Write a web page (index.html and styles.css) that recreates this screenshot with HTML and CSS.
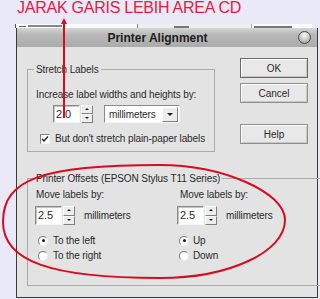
FILE: index.html
```html
<!DOCTYPE html>
<html>
<head>
    <link rel="stylesheet" href="styles.css">
</head>
<body>
    <div class="note">JARAK GARIS LEBIH AREA CD</div>

    <!-- window lying behind the dialog, only its top edge shows -->
    <div class="behind">
        <span class="tab tab-first"></span>
        <span class="tab tab-mid"></span>
        <span class="tab tab-last"></span>
    </div>

    <div class="dialog">
        <div class="titlebar">
            <span class="title">Printer Alignment</span>
            <span class="close-btn"></span>
        </div>

        <div class="dialog-body">
            <div class="top-row">
                <fieldset class="group stretch">
                    <legend>Stretch Labels</legend>
                    <div class="label-line">Increase label widths and heights by:</div>
                    <div class="control-row stretch-row">
                        <span class="spinner tall">
                            <span class="spin-field">2.0</span>
                            <span class="spin-btns">
                                <span class="spin up"></span>
                                <span class="spin down"></span>
                            </span>
                        </span>
                        <span class="combo">
                            <span class="combo-text">millimeters</span>
                            <span class="combo-btn"><span class="arrow-down"></span></span>
                        </span>
                    </div>
                    <div class="check-row">
                        <span class="checkbox">
                            <svg width="8" height="8" viewBox="0 0 8 8"><polyline points="1,4 3,6 7,1.5" fill="none" stroke="#222" stroke-width="1.4"/></svg>
                        </span>
                        <span>But don't stretch plain-paper labels</span>
                    </div>
                </fieldset>

                <div class="buttons">
                    <button class="button default">OK</button>
                    <button class="button cancel">Cancel</button>
                    <button class="button help">Help</button>
                </div>
            </div>

            <fieldset class="group offsets">
                <legend>Printer Offsets (EPSON Stylus T11 Series)</legend>
                <div class="columns">
                    <div class="column col-left">
                        <div class="label-line">Move labels by:</div>
                        <div class="control-row">
                            <span class="spinner">
                                <span class="spin-field">2.5</span>
                                <span class="spin-btns">
                                    <span class="spin up"></span>
                                    <span class="spin down"></span>
                                </span>
                            </span>
                            <span class="unit">millimeters</span>
                        </div>
                        <div class="radio-row first">
                            <span class="radio on"></span>
                            <span>To the left</span>
                        </div>
                        <div class="radio-row">
                            <span class="radio"></span>
                            <span>To the right</span>
                        </div>
                    </div>
                    <div class="column col-right">
                        <div class="label-line">Move labels by:</div>
                        <div class="control-row">
                            <span class="spinner">
                                <span class="spin-field">2.5</span>
                                <span class="spin-btns">
                                    <span class="spin up"></span>
                                    <span class="spin down"></span>
                                </span>
                            </span>
                            <span class="unit">millimeters</span>
                        </div>
                        <div class="radio-row first">
                            <span class="radio on"></span>
                            <span>Up</span>
                        </div>
                        <div class="radio-row">
                            <span class="radio"></span>
                            <span>Down</span>
                        </div>
                    </div>
                </div>
            </fieldset>
        </div>
    </div>

    <!-- hand drawn red marks over the screenshot -->
    <svg class="marks" width="320" height="299" viewBox="0 0 320 299">
        <line x1="64" y1="22" x2="64" y2="118" stroke="#d80c20" stroke-width="2"/>
        <polygon points="64,18 61,24 67,24" fill="#d80c20"/>
        <path d="M3,222 C3,179 42,165 160,165 C222,165 285,192 285,220 C285,252 229,278 160,278 C50,278 3,261 3,222 Z"
              fill="none" stroke="#d80c20" stroke-width="2"/>
    </svg>
</body>
</html>
```

FILE: styles.css
```css
body {
    margin: 0;
    background-color: #e9e9f7;
    font-family: "Liberation Sans", Arial, sans-serif;
    overflow: hidden;
}
.note {
    height: 24px;
    padding-left: 17px;
    font-size: 16px;
    line-height: 15px;
    letter-spacing: -0.25px;
    color: #e31b3f;
}
.behind {
    display: flex;
    margin-left: 15px;
    width: 296px;
    height: 4px;
    background-color: #fbfbfb;
    border-left: 1px solid #555;
}
.tab {
    height: 4px;
}
.tab-first {
    width: 121px;
    background: linear-gradient(#666, #666) no-repeat 3px 2px / 7px 1px,
                linear-gradient(#888, #888) no-repeat 12px 1px / 34px 2px;
}
.tab-mid {
    width: 113px;
    border-left: 1px solid #888;
    background: #eeeeee linear-gradient(#777, #777) no-repeat 36px 2px / 15px 2px;
}
.tab-last {
    flex: 1;
    border-left: 1px solid #aaa;
    background: linear-gradient(#777, #777) no-repeat 2px 2px / 38px 2px;
}
.dialog {
    margin-left: 16px;
    width: 300px;
    height: 269px;
    background-color: #e3e3e3;
    border-left: 1px solid #3a3a3a;
    border-right: 1px solid #3a3a3a;
    border-bottom: 1px solid #3a3a3a;
    color: #2a2a2a;
    font-size: 10px;
    letter-spacing: -0.1px;
}
.titlebar {
    display: flex;
    align-items: center;
    height: 19px;
    padding-right: 6px;
    background: linear-gradient(#d6d6d6, #b8b8b8 35%, #ababab);
}
.title {
    flex: 1;
    text-align: center;
    font-size: 12px;
    font-weight: bold;
    letter-spacing: 0;
    color: #1e1e1e;
}
.close-btn {
    width: 11px;
    height: 11px;
    border-radius: 50%;
    border: 1px solid #4a4a4a;
    background: radial-gradient(circle at 50% 30%, #fafafa, #c4c4c4 55%, #8a8a8a);
}
.dialog-body {
    padding: 11px 9px 0 10px;
}
.top-row {
    display: flex;
    align-items: flex-start;
}
.group {
    box-sizing: border-box;
    margin: 0;
    padding: 0 8px;
    border: 1px solid #aaaaaa;
}
.group legend {
    margin-left: -2px;
    padding: 0 2px;
    line-height: 13px;
}
.stretch {
    margin-top: 5px;
    width: 188px;
    height: 89px;
}
.label-line {
    margin-top: 12px;
    line-height: 13px;
}
.control-row {
    display: flex;
    align-items: center;
    margin-top: 4px;
}
.stretch-row {
    padding-left: 17px;
}
.spinner {
    display: flex;
    height: 19px;
}
.spinner.tall {
    height: 18px;
}
.spin-field {
    box-sizing: border-box;
    width: 27px;
    padding: 2px 0 0 2px;
    background-color: #fff;
    border: 1px solid;
    border-color: #8a8a8a #f6f6f6 #f6f6f6 #8a8a8a;
    box-shadow: inset 1px 1px 0 #c4c4c4;
    font-size: 11px;
    line-height: 13px;
}
.spin-btns {
    display: flex;
    flex-direction: column;
    width: 12px;
    margin-left: 1px;
}
.spin {
    flex: 1;
    position: relative;
    background-color: #ededed;
    border: 1px solid;
    border-color: #fff #808080 #808080 #fff;
}
.spin::after {
    content: "";
    position: absolute;
    left: 3px;
    top: 2px;
    border-left: 2px solid transparent;
    border-right: 2px solid transparent;
}
.spin.up::after {
    border-bottom: 2px solid #222;
}
.spin.down::after {
    border-top: 2px solid #222;
}
.combo {
    display: flex;
    align-items: center;
    box-sizing: border-box;
    width: 76px;
    height: 18px;
    margin-left: 11px;
    padding-right: 1px;
    background-color: #fff;
    border: 1px solid;
    border-color: #8a8a8a #f6f6f6 #f6f6f6 #8a8a8a;
}
.combo-text {
    flex: 1;
    padding-left: 4px;
}
.combo-btn {
    display: flex;
    align-items: center;
    justify-content: center;
    width: 14px;
    height: 13px;
    background-color: #ededed;
    border: 1px solid;
    border-color: #fff #808080 #808080 #fff;
}
.arrow-down {
    border-left: 3px solid transparent;
    border-right: 3px solid transparent;
    border-top: 3px solid #222;
}
.check-row {
    display: flex;
    align-items: center;
    gap: 5px;
    height: 10px;
    margin-top: 11px;
    padding-left: 4px;
    line-height: 12px;
    white-space: nowrap;
}
.checkbox {
    display: flex;
    align-items: center;
    justify-content: center;
    box-sizing: border-box;
    width: 10px;
    height: 10px;
    background-color: #fff;
    border: 1px solid;
    border-color: #808080 #f0f0f0 #f0f0f0 #808080;
}
.buttons {
    display: flex;
    flex-direction: column;
    margin-left: auto;
    width: 68px;
}
.button {
    height: 20px;
    padding: 0;
    font-family: inherit;
    font-size: 10px;
    color: #2a2a2a;
    background-color: #e8e8e8;
    border: 1px solid #8e8e8e;
    box-shadow: inset 1px 1px 0 #fff, inset -1px -1px 0 #c8c8c8;
}
.button.default {
    border-color: #6a6a6a;
}
.button.cancel {
    margin-top: 5px;
}
.button.help {
    margin-top: 21px;
}
.offsets {
    margin-top: 20px;
    width: 266px;
    height: 114px;
}
.offsets .label-line {
    margin-top: 3px;
}
.columns {
    display: flex;
}
.column {
    width: 141px;
}
.col-left .spinner {
    margin-left: -1px;
}
.col-right {
    flex: 1;
}
.col-right .label-line {
    padding-left: 3px;
}
.control-row .unit {
    margin-left: 9px;
}
.offsets .control-row {
    margin-top: 5px;
}
.radio-row {
    display: flex;
    align-items: center;
    gap: 5px;
    height: 15px;
    padding-left: 2px;
}
.radio-row.first {
    margin-top: 8px;
}
.col-right .radio-row {
    gap: 4px;
}
.radio {
    display: flex;
    align-items: center;
    justify-content: center;
    box-sizing: border-box;
    width: 10px;
    height: 10px;
    border-radius: 50%;
    background-color: #fff;
    border: 1px solid;
    border-color: #7a7a7a #eeeeee #eeeeee #7a7a7a;
}
.radio.on::after {
    content: "";
    width: 3px;
    height: 3px;
    border-radius: 50%;
    background-color: #1a1a1a;
}
.marks {
    position: absolute;
    top: 0;
    left: 0;
    pointer-events: none;
}
```
